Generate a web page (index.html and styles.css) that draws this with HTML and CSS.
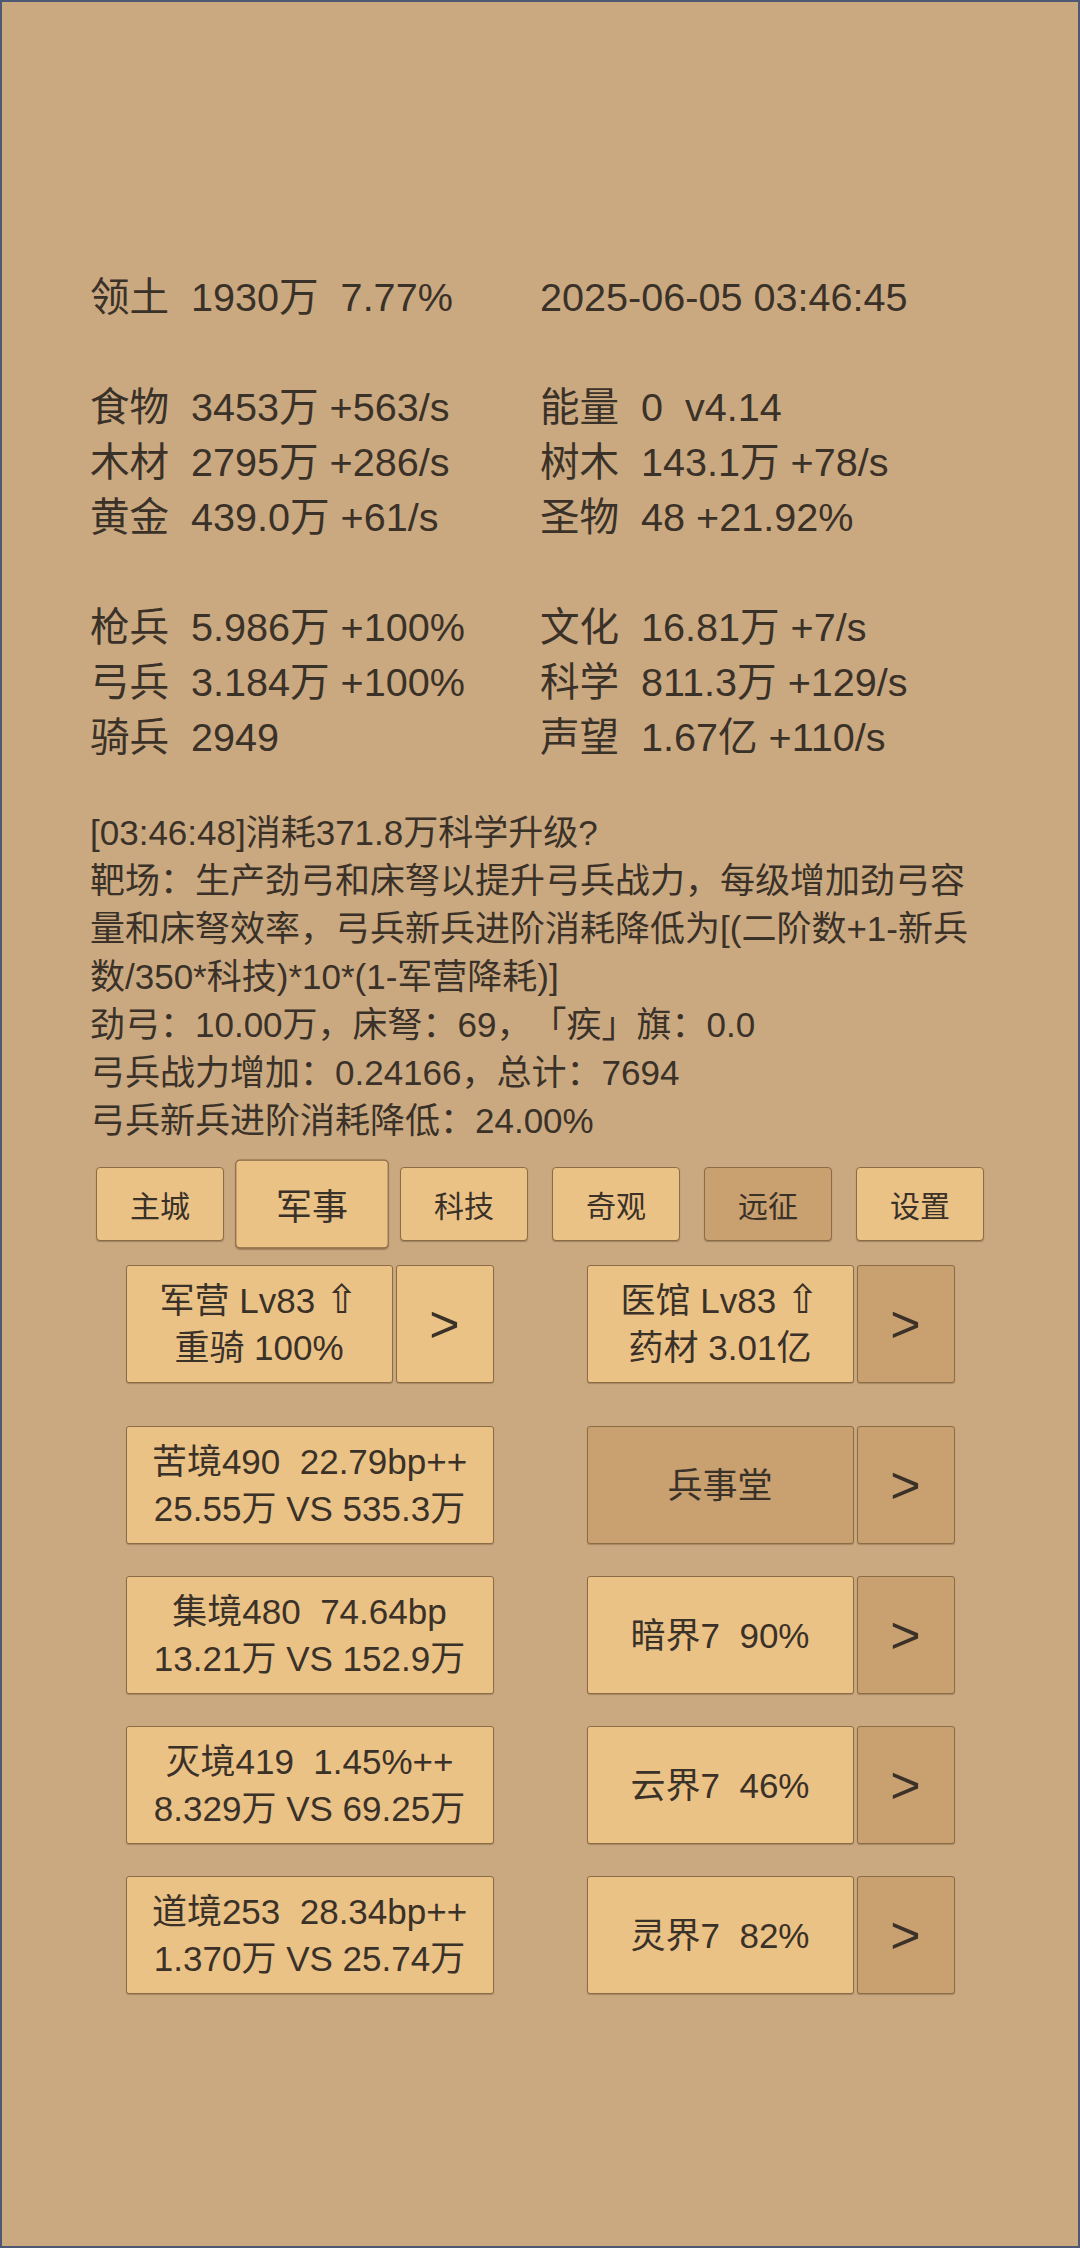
FILE: index.html
```html
<!DOCTYPE html>
<html lang="zh-CN">
<head>
<meta charset="utf-8">
<title>Game</title>
<link rel="stylesheet" href="styles.css">
</head>
<body>
<div class="page">
  <section class="stats">
    <div class="col">
      <div class="ln"><span class="k">领土</span>1930万  7.77%</div>
      <div class="ln"> </div>
      <div class="ln"><span class="k">食物</span>3453万 +563/s</div>
      <div class="ln"><span class="k">木材</span>2795万 +286/s</div>
      <div class="ln"><span class="k">黄金</span>439.0万 +61/s</div>
      <div class="ln"> </div>
      <div class="ln"><span class="k">枪兵</span>5.986万 +100%</div>
      <div class="ln"><span class="k">弓兵</span>3.184万 +100%</div>
      <div class="ln"><span class="k">骑兵</span>2949</div>
    </div>
    <div class="col">
      <div class="ln">2025-06-05 03:46:45</div>
      <div class="ln"> </div>
      <div class="ln"><span class="k">能量</span>0  v4.14</div>
      <div class="ln"><span class="k">树木</span>143.1万 +78/s</div>
      <div class="ln"><span class="k">圣物</span>48 +21.92%</div>
      <div class="ln"> </div>
      <div class="ln"><span class="k">文化</span>16.81万 +7/s</div>
      <div class="ln"><span class="k">科学</span>811.3万 +129/s</div>
      <div class="ln"><span class="k">声望</span>1.67亿 +110/s</div>
    </div>
  </section>

  <section class="log">
    <p>[03:46:48]消耗371.8万科学升级?</p>
    <p>靶场：生产劲弓和床弩以提升弓兵战力，每级增加劲弓容量和床弩效率，弓兵新兵进阶消耗降低为[(二阶数+1-新兵数/350*科技)*10*(1-军营降耗)]</p>
    <p>劲弓：10.00万，床弩：69，「疾」旗：0.0</p>
    <p>弓兵战力增加：0.24166，总计：7694</p>
    <p>弓兵新兵进阶消耗降低：24.00%</p>
  </section>

  <nav class="tabs">
    <div class="tab">主城</div>
    <div class="tab active">军事</div>
    <div class="tab">科技</div>
    <div class="tab">奇观</div>
    <div class="tab dark">远征</div>
    <div class="tab">设置</div>
  </nav>

  <section class="grid">
    <div class="row first">
      <div class="group">
        <div class="btn main"><span>军营 Lv83 <span class="up">⇧</span></span><span>重骑 100%</span></div>
        <div class="btn arrow">&gt;</div>
      </div>
      <div class="group">
        <div class="btn main"><span>医馆 Lv83 <span class="up">⇧</span></span><span>药材 3.01亿</span></div>
        <div class="btn arrow dark">&gt;</div>
      </div>
    </div>
    <div class="row">
      <div class="group">
        <div class="btn wide"><span>苦境490  22.79bp++</span><span>25.55万 VS 535.3万</span></div>
      </div>
      <div class="group">
        <div class="btn main dark"><span>兵事堂</span></div>
        <div class="btn arrow dark">&gt;</div>
      </div>
    </div>
    <div class="row">
      <div class="group">
        <div class="btn wide"><span>集境480  74.64bp</span><span>13.21万 VS 152.9万</span></div>
      </div>
      <div class="group">
        <div class="btn main"><span>暗界7  90%</span></div>
        <div class="btn arrow dark">&gt;</div>
      </div>
    </div>
    <div class="row">
      <div class="group">
        <div class="btn wide"><span>灭境419  1.45%++</span><span>8.329万 VS 69.25万</span></div>
      </div>
      <div class="group">
        <div class="btn main"><span>云界7  46%</span></div>
        <div class="btn arrow dark">&gt;</div>
      </div>
    </div>
    <div class="row">
      <div class="group">
        <div class="btn wide"><span>道境253  28.34bp++</span><span>1.370万 VS 25.74万</span></div>
      </div>
      <div class="group">
        <div class="btn main"><span>灵界7  82%</span></div>
        <div class="btn arrow dark">&gt;</div>
      </div>
    </div>
  </section>
</div>
</body>
</html>
```

FILE: styles.css
```css
* { box-sizing: border-box; }

html, body {
  margin: 0;
  padding: 0;
  background: #caa981;
}

body {
  font-family: "Liberation Sans", "Noto Sans CJK SC", sans-serif;
  color: #3a3128;
  text-spacing-trim: space-all;
}

.page {
  width: 1080px;
  height: 2248px;
  border: 2px solid #4e5874;
  background: #caa981;
  padding: 268px 88px 0 88px;
  overflow: hidden;
}

.stats {
  display: grid;
  grid-template-columns: 450px 1fr;
  font-size: 39.6px;
  line-height: 55px;
}

.ln {
  white-space: pre;
  height: 55px;
}

.k {
  display: inline-block;
  width: 101px;
}

.log {
  margin-top: 44px;
  font-size: 35px;
  line-height: 48px;
}

.log p {
  margin: 0;
}

.tabs {
  margin-top: 22px;
  display: flex;
  justify-content: center;
  gap: 24px;
}

.tab {
  width: 128px;
  height: 74px;
  display: flex;
  align-items: center;
  justify-content: center;
  font-size: 30px;
  background: #ebc286;
  border: 1px solid #8c6c46;
  border-radius: 4px;
  box-shadow: 0 1px 1px rgba(80, 55, 25, 0.35);
}

.tab.active {
  transform: scale(1.2);
}

.tab.dark {
  background: #c9a06f;
}

.grid {
  margin-top: 24px;
  display: flex;
  flex-direction: column;
  gap: 32px;
}

.row {
  display: flex;
  justify-content: center;
  gap: 93px;
}

.row.first {
  margin-bottom: 11px;
}

.group {
  width: 368px;
  display: flex;
  gap: 3px;
}

.btn {
  height: 118px;
  display: flex;
  flex-direction: column;
  align-items: center;
  justify-content: center;
  background: #ebc286;
  border: 1px solid #8c6c46;
  border-radius: 3px;
  box-shadow: 0 1px 1px rgba(80, 55, 25, 0.3);
  font-size: 35px;
  line-height: 47px;
  white-space: pre;
}

.btn.main { width: 267px; }
.btn.wide { width: 368px; }
.btn.arrow {
  width: 98px;
  font-size: 52px;
}

.btn.dark {
  background: #c9a06f;
}

.up {
  font-family: "DejaVu Sans", sans-serif;
  font-size: 40px;
  line-height: 40px;
}
```
